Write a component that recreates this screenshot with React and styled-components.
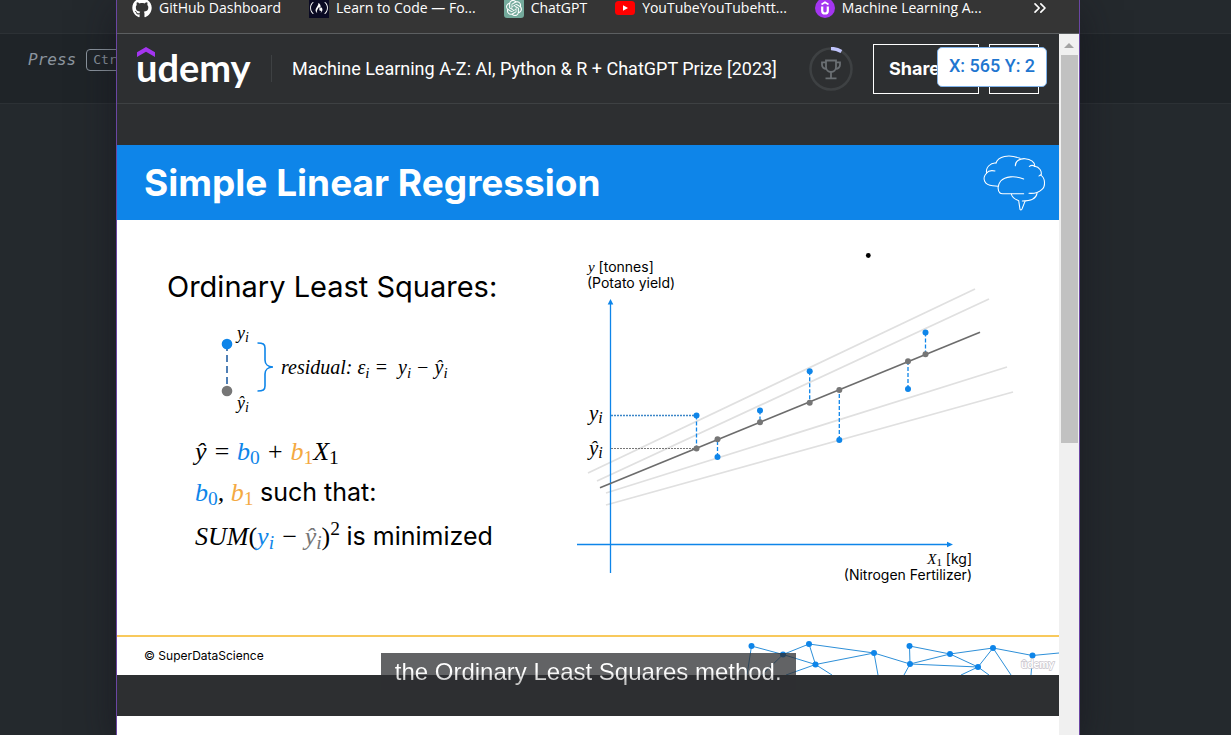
import React from "react";
import styled, { createGlobalStyle } from "styled-components";
import { FaGithub, FaFreeCodeCamp } from "react-icons/fa";
import { SiOpenai } from "react-icons/si";
import { ChevronsRight } from "lucide-react";

const Global = createGlobalStyle`
  *, *::before, *::after { box-sizing: border-box; }
  body { margin: 0; background: #24292d; font-family: "Liberation Sans", Arial, sans-serif; }
  h1, h2, p { margin: 0; font-weight: 400; }
`;

const blue = "#0e85e9";
const grey = "#767676";
const amber = "#f4a942";
const sans = `Inter, "Liberation Sans", sans-serif`;
const serif = `"Liberation Serif", "Times New Roman", serif`;

const Desktop = styled.div`
  display: grid;
  grid-template-columns: 116px minmax(0, 1fr) 151px;
  height: 100vh;
  overflow: hidden;
`;

const EditorPane = styled.aside`
  display: grid;
  grid-template-rows: 34px 70px 1fr;
  min-width: 0;
  overflow: hidden;
  color: #8b949e;
`;

const EditorBand = styled.div`
  display: flex;
  align-items: center;
  gap: 10px;
  padding: 0 0 18px 28px;
  background: ${(p) => (p.$dark ? "#1f2428" : "#24292d")};
  border-bottom: ${(p) => (p.$line ? "1px solid #2c3135" : "0")};
  font: italic 16px "DejaVu Sans Mono", monospace;
`;

const Key = styled.kbd`
  flex: none;
  height: 22px;
  padding: 0 6px;
  border: 1px solid #8b949e;
  border-radius: 4px;
  font: 13px/20px "DejaVu Sans Mono", monospace;
`;

const Window = styled.main`
  position: relative;
  display: flex;
  flex-direction: column;
  min-width: 0;
  border: solid #6b46a3;
  border-width: 0 1px;
  background: #2d2f31;
  box-shadow: 0 10px 36px rgba(20, 18, 28, 0.6);
`;

const BookmarkBar = styled.nav`
  display: flex;
  align-items: flex-end;
  gap: 28px;
  height: 34px;
  flex: none;
  padding: 0 29px 15px 15px;
  overflow: hidden;
  background: #353535;
  border-bottom: 1px solid #5c5f61;
`;

const Bookmark = styled.a`
  display: flex;
  align-items: center;
  gap: 7px;
  flex: none;
  height: 20px;
  color: #fff;
  font: 14px/20px "Open Sans", "Noto Sans", sans-serif;
  text-decoration: none;
`;

const BookmarkIcon = styled.span`
  display: flex;
  align-items: center;
  justify-content: center;
  width: 20px;
  height: 20px;
  overflow: hidden;
  border-radius: ${(p) => p.$radius || "0"};
  background: ${(p) => p.$bg || "transparent"};
  color: #fff;
`;

const PlainButton = styled.button`
  display: flex;
  margin-left: auto;
  padding: 0;
  border: 0;
  background: none;
  color: #fff;
`;

const Viewport = styled.div`
  display: flex;
  flex: 1;
  min-height: 0;
`;

const Page = styled.div`
  flex: 1;
  min-width: 0;
  overflow: hidden;
  background: #fff;
`;

const Header = styled.header`
  position: relative;
  display: flex;
  align-items: center;
  height: 70px;
  padding: 0 20px 0 19px;
  background: #2d2f31;
  border-bottom: 1px solid #3e4143;
`;

const Logo = styled.a`
  position: relative;
  display: block;
  width: 115px;
  padding-bottom: 4px;
  color: #fff;
  font: 700 38px/40px Lato, sans-serif;
  text-decoration: none;

  svg {
    position: absolute;
    left: 1px;
    top: 0;
  }
`;

const Divider = styled.span`
  width: 1px;
  height: 27px;
  margin: 0 20px;
  background: #3e4143;
`;

const CourseTitle = styled.h1`
  flex: 1;
  color: #fff;
  font: 18px/24px Roboto, sans-serif;
  white-space: nowrap;
`;

const HeaderButton = styled.button`
  height: 50px;
  width: ${(p) => p.$width};
  margin-left: ${(p) => p.$gap};
  padding: 0 15px;
  border: 1px solid #fff;
  background: transparent;
  color: #fff;
  font: 700 18px/24px ${sans};
  text-align: left;
`;

const RingButton = styled(PlainButton)`
  flex: none;
`;

const Coordinates = styled.output`
  position: absolute;
  top: 13px;
  right: 12px;
  width: 110px;
  height: 40px;
  border: 1px solid #7fb2ea;
  border-radius: 5px;
  background: #fff;
  color: #1f76d0;
  font: 500 18px/36px Roboto, sans-serif;
  text-align: center;
`;

const Player = styled.section`
  padding: 41px 0;
  background: #2d2f31;
`;

const Slide = styled.article`
  position: relative;
  background: #fff;
  color: #000;
  font-family: ${sans};
`;

const SlideHeader = styled.header`
  display: flex;
  align-items: center;
  justify-content: space-between;
  height: 75px;
  padding: 0 9px 0 27px;
  background: ${blue};
`;

const SlideTitle = styled.h2`
  color: #fff;
  font: 700 37px/48px ${sans};
`;

const SlideBody = styled.div`
  display: grid;
  grid-template-columns: 453px 1fr;
  height: 415px;
`;

const Explanation = styled.div`
  padding: 47px 0 0 50px;
`;

const Lead = styled.p`
  font: 29px/40px ${sans};
`;

const Derivation = styled.div`
  padding-left: 28px;
`;

const ResidualRow = styled.div`
  display: flex;
  align-items: center;
  height: 90px;
  margin: 15px 0 20px;
`;

const Diagram = styled.svg`
  flex: none;
  overflow: visible;
`;

const Formula = styled.p`
  margin-top: ${(p) => p.$gap || "0"};
  font: italic ${(p) => p.$size || "26px"}/40px ${serif};
  white-space: pre;
`;

const Sub = styled.sub`
  font-size: 75%;
  line-height: 0;
  vertical-align: -4px;
  font-style: ${(p) => (p.$upright ? "normal" : "italic")};
`;

const Sup = styled.sup`
  font-size: 75%;
  line-height: 0;
  font-style: normal;
`;

const Tint = styled.span`
  color: ${(p) => p.$color};
`;

const Upright = styled.span`
  font-style: normal;
`;

const Words = styled.span`
  font: 25px/40px ${sans};
`;

const ChartCell = styled.figure`
  margin: 0;
  padding-top: 20px;
`;

const SlideFooter = styled.footer`
  display: flex;
  align-items: center;
  justify-content: space-between;
  height: 40px;
  padding-left: 27px;
  border-top: 2px solid #f8c95c;
  font: 12px/16px ${sans};
`;

const Caption = styled.p`
  position: absolute;
  left: 28%;
  bottom: -15px;
  padding: 0 14px;
  background: rgba(45, 47, 49, 0.75);
  font: 24px/37px "Liberation Sans", Arial, sans-serif;
  white-space: nowrap;

  span {
    color: transparent;
    background: linear-gradient(#fff 50%, #c4c4c4 90%);
    background-clip: text;
  }
`;

const Scrollbar = styled.div`
  display: flex;
  flex-direction: column;
  width: 20px;
  background: #f0f0f0;
`;

const ScrollArrow = styled.button`
  display: flex;
  align-items: center;
  justify-content: center;
  height: 21px;
  padding: 2px 0 0;
  border: 0;
  background: none;
`;

const ScrollTrack = styled.div`
  flex: 1;
  padding: 0 1px 0 2px;
`;

const ScrollThumb = styled.div`
  height: 57%;
  background: #c1c1c1;
`;

function UdemyBadge() {
  return (
    <svg width="20" height="20" viewBox="0 0 20 20" fill="none" stroke="#fff">
      <path d="M6.5 6.5 10 4.3l3.5 2.2" strokeWidth="1.7" />
      <path d="M7.2 8.5v4.2a2.8 2.8 0 0 0 5.6 0V8.5" strokeWidth="2.2" />
    </svg>
  );
}

function YouTubeMark() {
  return (
    <svg width="20" height="14" viewBox="0 0 20 14">
      <rect width="20" height="14" rx="3.5" fill="#f00" />
      <path d="M8 4.2v5.6L13 7z" fill="#fff" />
    </svg>
  );
}

const bookmarks = [
  { label: "GitHub Dashboard", icon: <FaGithub size={20} /> },
  { label: "Learn to Code — Fo...", icon: <FaFreeCodeCamp size={18} />, bg: "#0a0a23" },
  { label: "ChatGPT", icon: <SiOpenai size={16} />, bg: "#74aa9c", radius: "3px" },
  { label: "YouTubeYouTubehtt...", icon: <YouTubeMark /> },
  { label: "Machine Learning A...", icon: <UdemyBadge />, bg: "#a435f0", radius: "50%" },
];

function Trophy() {
  return (
    <svg width="44" height="44" viewBox="0 0 44 44" fill="none">
      <circle cx="22" cy="22" r="20.5" stroke="#3e4143" strokeWidth="2.5" />
      <path d="M22 1.6a20.5 20.5 0 0 1 10.4 2.8" stroke="#c0c4fc" strokeWidth="3.5" />
      <g stroke="#6a6f73" strokeWidth="1.8">
        <path d="M17 13.5h10v6.5a5 5 0 0 1-10 0z" />
        <path d="M17 15.3h-4v2.5a4 4 0 0 0 4.3 4M27 15.3h4v2.5a4 4 0 0 1-4.3 4" />
        <path d="M22 25v6M16.5 31.3h11" />
      </g>
    </svg>
  );
}

function Brain() {
  return (
    <svg width="70" height="62" viewBox="60 35 210 186" fill="none" stroke="#fff" strokeWidth="3.2" strokeLinecap="round">
      <path d="M108 68C114 48 146 40 180 54" />
      <path d="M166 76C166 62 180 54 195 55C212 56 226 66 224 78C238 80 247 92 243 105" />
      <path d="M208 78C214 74 220 75 224 78" />
      <path d="M237 107C240 103 242 103 243 105C256 113 257 138 246 147C237 156 222 160 207 159" />
      <path d="M108 68C92 66 76 82 80 98C84 92 95 90 105 92" />
      <path d="M80 98C64 115 74 135 98 136L114 138" />
      <path d="M191 116C165 105 135 108 122 122C112 135 112 150 120 158Q122 160 128 160H191" />
      <path d="M154 161C156 172 168 178 176 181L180 207Q183 211 186 206L195 183" />
      <path d="M231 159C228 178 210 182 187 182" />
    </svg>
  );
}

function ResidualDiagram() {
  return (
    <Diagram width="86" height="90" viewBox="195 322 86 90">
      <path d="M227 344V391" stroke="#4f7fb5" strokeWidth="2" strokeDasharray="7 4" />
      <circle cx="227" cy="344" r="5.3" fill={blue} />
      <circle cx="227" cy="391" r="5.3" fill={grey} />
      <path
        d="M257.5 343C263 343 265 344 265 348V360C265 364 268 367 273 367C268 367 265 370 265 374V386C265 390 263 391 257.5 391"
        fill="none"
        stroke={blue}
        strokeWidth="1.6"
      />
      <g fontFamily="Liberation Serif, serif" fontStyle="italic" fontSize="18">
        <text x="237" y="339">y<tspan dy="3" fontSize="14">i</tspan></text>
        <text x="237" y="409">ŷ<tspan dy="3" fontSize="14">i</tspan></text>
      </g>
    </Diagram>
  );
}

const trialLines = [
  [588, 473, 975, 289],
  [597, 481, 989, 299],
  [606, 493, 1007, 367],
  [606, 505, 1013, 392],
];

const samples = [
  { x: 696.5, actual: 415.5, fitted: 448.5 },
  { x: 717.5, actual: 457, fitted: 439.3 },
  { x: 760, actual: 410.5, fitted: 422.3 },
  { x: 809.7, actual: 371.3, fitted: 402.7 },
  { x: 839.3, actual: 440, fitted: 390 },
  { x: 908, actual: 389, fitted: 361.3 },
  { x: 925.5, actual: 332.5, fitted: 354.2 },
];

function RegressionChart() {
  return (
    <svg width="480" height="360" viewBox="570 240 480 360" fontFamily="Inter, sans-serif" fontSize="14">
      <g stroke="#e0e0e0" strokeWidth="1.8">
        {trialLines.map(([x1, y1, x2, y2]) => (
          <line key={y1} x1={x1} y1={y1} x2={x2} y2={y2} />
        ))}
      </g>
      <g stroke={blue} strokeWidth="1.3">
        <path d="M610.5 302V573M577 544.5H950" />
        <path d="M611 415.5H696" stroke="#3c86c8" strokeDasharray="2 1" />
        <path d="M611 448.5H696" stroke="#777" strokeWidth="1" strokeDasharray="2 1" />
      </g>
      <path d="M607.7 304.5L610.5 299L613.3 304.5ZM947 541.8L953 544.5L947 547.2Z" fill={blue} />
      <line x1="600" y1="487.7" x2="980" y2="332.3" stroke="#6c6c6c" strokeWidth="1.6" />
      {samples.map((s) => (
        <g key={s.x}>
          <line x1={s.x} x2={s.x} y1={s.actual} y2={s.fitted} stroke={blue} strokeWidth="1.3" strokeDasharray="4 2" />
          <circle cx={s.x} cy={s.actual} r="3" fill={blue} />
          <circle cx={s.x} cy={s.fitted} r="3" fill={grey} />
        </g>
      ))}
      <circle cx="868.3" cy="255.5" r="2.4" />
      <text x="588" y="272">
        <tspan fontFamily="Liberation Serif, serif" fontStyle="italic" fontSize="15">y</tspan> [tonnes]
      </text>
      <text x="587" y="288">(Potato yield)</text>
      <g fontFamily="Liberation Serif, serif" fontStyle="italic" fontSize="21">
        <text x="589" y="420">y<tspan dy="3" fontSize="16">i</tspan></text>
        <text x="589" y="455">ŷ<tspan dy="3" fontSize="16">i</tspan></text>
      </g>
      <text x="972" y="564" textAnchor="end">
        <tspan fontFamily="Liberation Serif, serif" fontStyle="italic" fontSize="15">X</tspan>
        <tspan fontFamily="Liberation Serif, serif" fontSize="11" dy="2">1</tspan>
        <tspan dy="-2"> [kg]</tspan>
      </text>
      <text x="972" y="580" textAnchor="end">(Nitrogen Fertilizer)</text>
    </svg>
  );
}

const nodes = [
  [751.5, 646], [783, 654.5], [809, 644], [815.5, 664.5], [874, 653], [909.5, 646],
  [910, 664], [950, 654], [993, 648], [978, 667], [1032.5, 655.5],
];

function Network() {
  return (
    <svg width="324" height="38" viewBox="735 637 324 38">
      <path
        d="M747 675L751.5 646L783 654.5L809 644L815.5 664.5L783 654.5L762 675M786 675L815.5 664.5L832 675M815.5 664.5L874 653L809 644M878 675L874 653L910 664L909.5 646L950 654L910 664L978 667L950 654L993 648L978 667L961 675M904 675L910 664M978 667L989 675M1011 675L993 648L1032.5 655.5L1059 653M1032.5 655.5L1031 675"
        fill="none"
        stroke="#2d8fd8"
      />
      {nodes.map(([x, y]) => (
        <circle key={x} cx={x} cy={y} r="3" fill={blue} />
      ))}
      <text x="1021" y="668" fontFamily="Lato, sans-serif" fontWeight="700" fontSize="11" fill="#fff" stroke="#c9c5cc" strokeWidth="1.4" paintOrder="stroke">
        ûdemy
      </text>
    </svg>
  );
}

export default function App() {
  return (
    <>
      <Global />
      <Desktop>
        <EditorPane>
          <EditorBand $line />
          <EditorBand $dark $line>
            Press <Key>Ctrl</Key>
          </EditorBand>
          <EditorBand />
        </EditorPane>

        <Window>
          <BookmarkBar aria-label="Bookmarks">
            {bookmarks.map((b) => (
              <Bookmark key={b.label} href="#">
                <BookmarkIcon $bg={b.bg} $radius={b.radius}>
                  {b.icon}
                </BookmarkIcon>
                {b.label}
              </Bookmark>
            ))}
            <PlainButton aria-label="More bookmarks">
              <ChevronsRight size={20} />
            </PlainButton>
          </BookmarkBar>

          <Viewport>
            <Page>
              <Header>
                <Logo href="#">
                  udemy
                  <svg width="18" height="10" viewBox="0 0 18 10">
                    <path d="M9 0L18 5.2V10L9 4.8L0 10V5.2Z" fill="#a435f0" />
                  </svg>
                </Logo>
                <Divider />
                <CourseTitle>Machine Learning A-Z: AI, Python &amp; R + ChatGPT Prize [2023]</CourseTitle>
                <RingButton aria-label="Your progress">
                  <Trophy />
                </RingButton>
                <HeaderButton $width="106px" $gap="20px">Share</HeaderButton>
                <HeaderButton $width="50px" $gap="10px" aria-label="More options" />
                <Coordinates>X: 565 Y: 2</Coordinates>
              </Header>

              <Player>
                <Slide>
                  <SlideHeader>
                    <SlideTitle>Simple Linear Regression</SlideTitle>
                    <Brain />
                  </SlideHeader>
                  <SlideBody>
                    <Explanation>
                      <Lead>Ordinary Least Squares:</Lead>
                      <Derivation>
                        <ResidualRow>
                          <ResidualDiagram />
                          <Formula $size="20px">
                            residual: ε<Sub>i</Sub> =  y<Sub>i</Sub> − ŷ<Sub>i</Sub>
                          </Formula>
                        </ResidualRow>
                        <Formula>
                          ŷ = <Tint $color={blue}>b<Sub $upright>0</Sub></Tint> +{" "}
                          <Tint $color={amber}>b<Sub $upright>1</Sub></Tint>X<Sub $upright>1</Sub>
                        </Formula>
                        <Formula>
                          <Tint $color={blue}>b<Sub $upright>0</Sub></Tint>,{" "}
                          <Tint $color={amber}>b<Sub $upright>1</Sub></Tint> <Words>such that:</Words>
                        </Formula>
                        <Formula $gap="3px">
                          SUM<Upright>(</Upright>
                          <Tint $color={blue}>y<Sub>i</Sub></Tint> − <Tint $color={grey}>ŷ<Sub>i</Sub></Tint>
                          <Upright>)</Upright>
                          <Sup>2</Sup> <Words>is minimized</Words>
                        </Formula>
                      </Derivation>
                    </Explanation>
                    <ChartCell>
                      <RegressionChart />
                    </ChartCell>
                  </SlideBody>
                  <SlideFooter>
                    © SuperDataScience
                    <Network />
                  </SlideFooter>
                  <Caption>
                    <span>the Ordinary Least Squares method.</span>
                  </Caption>
                </Slide>
              </Player>
            </Page>

            <Scrollbar>
              <ScrollArrow aria-label="Scroll up">
                <svg width="10" height="5" viewBox="0 0 10 5">
                  <path d="M0 5L5 0L10 5Z" fill="#a3a3a3" />
                </svg>
              </ScrollArrow>
              <ScrollTrack>
                <ScrollThumb />
              </ScrollTrack>
            </Scrollbar>
          </Viewport>
        </Window>

        <EditorPane>
          <EditorBand $line />
          <EditorBand $dark $line />
          <EditorBand />
        </EditorPane>
      </Desktop>
    </>
  );
}
